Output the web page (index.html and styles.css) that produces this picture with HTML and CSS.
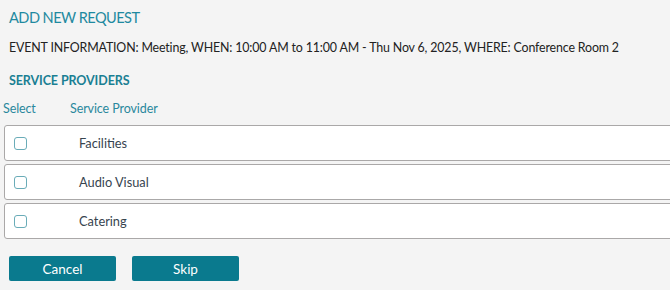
FILE: index.html
```html
<!DOCTYPE html>
<html>
<head>
<meta charset="utf-8">
<link rel="stylesheet" href="styles.css">
</head>
<body>
<div class="page">
  <h1 class="title">ADD NEW REQUEST</h1>
  <p class="event">EVENT INFORMATION: Meeting, WHEN: 10:00 AM to 11:00 AM - Thu Nov 6, 2025, WHERE: Conference Room 2</p>
  <h2 class="section">SERVICE PROVIDERS</h2>
  <div class="head">
    <span class="head-select">Select</span>
    <span class="head-name">Service Provider</span>
  </div>
  <div class="list">
    <label class="row"><span class="check"></span><span class="name">Facilities</span></label>
    <label class="row"><span class="check"></span><span class="name">Audio Visual</span></label>
    <label class="row"><span class="check"></span><span class="name">Catering</span></label>
  </div>
  <div class="actions">
    <button class="btn">Cancel</button>
    <button class="btn">Skip</button>
  </div>
</div>
</body>
</html>
```
FILE: styles.css
```css
html, body {
  margin: 0;
  padding: 0;
  background: #f4f4f4;
  overflow: hidden;
}
body {
  font-family: Lato, "Open Sans", sans-serif;
  color: #333;
  width: 670px;
  height: 290px;
}
.page {
  padding: 8px 0 0 4px;
}
.title {
  margin: 0 0 0 5px;
  font-size: 14.6px;
  letter-spacing: -0.55px;
  font-weight: 400;
  color: #1f8aa0;
  line-height: 20px;
}
.event {
  margin: 10px 0 0 5px;
  font-size: 12.4px;
  letter-spacing: -0.15px;
  line-height: 20px;
  color: #222;
  white-space: nowrap;
}
.section {
  margin: 13px 0 0 5px;
  font-size: 12.5px;
  letter-spacing: -0.1px;
  font-weight: 700;
  color: #1a7f93;
  line-height: 20px;
}
.head {
  display: flex;
  margin: 8px 0 0 -1px;
  font-size: 12.5px;
  letter-spacing: -0.1px;
  line-height: 20px;
  color: #2a889d;
}
.head-select {
  width: 67px;
}
.list {
  margin-top: 6px;
  width: 720px;
  display: flex;
  flex-direction: column;
  gap: 3px;
}
.row {
  display: flex;
  align-items: center;
  height: 34px;
  border: 1px solid #aaa8a8;
  border-radius: 3px;
  background: #fff;
}
.check {
  width: 11px;
  height: 11px;
  border: 1px solid #6aacb8;
  border-radius: 3px;
  margin-left: 9px;
  background: #fff;
}
.name {
  margin-left: 52px;
  font-size: 12.8px;
  color: #37444f;
}
.actions {
  display: flex;
  gap: 16px;
  margin: 17px 0 0 5px;
}
.btn {
  width: 107px;
  height: 25px;
  border: none;
  border-radius: 2px;
  background: #0a7a8e;
  color: #fff;
  font-family: Lato, "Open Sans", sans-serif;
  font-size: 13.5px;
  padding: 0;
}
```
